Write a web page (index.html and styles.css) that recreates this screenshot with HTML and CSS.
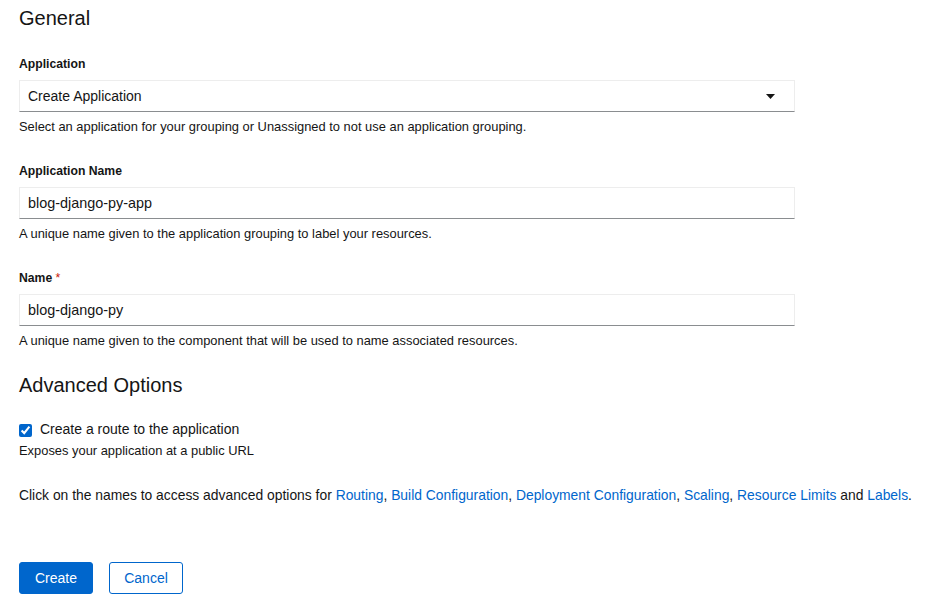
FILE: index.html
```html
<!DOCTYPE html>
<html lang="en">
<head>
<meta charset="utf-8">
<title>General</title>
<link rel="stylesheet" href="styles.css">
</head>
<body>
<form class="form">
  <h2 class="section-title">General</h2>
  <div class="groups">
    <div class="group">
      <label class="label">Application</label>
      <div class="select">
        <span class="select-text">Create Application</span>
        <svg class="caret" width="9" height="5" viewBox="0 0 9 5"><path d="M0 0 L9 0 L4.5 5 Z" fill="#151515"/></svg>
      </div>
      <div class="helper">Select an application for your grouping or Unassigned to not use an application grouping.</div>
    </div>
    <div class="group">
      <label class="label">Application Name</label>
      <div class="input">blog-django-py-app</div>
      <div class="helper">A unique name given to the application grouping to label your resources.</div>
    </div>
    <div class="group">
      <label class="label">Name <span class="req">*</span></label>
      <div class="input">blog-django-py</div>
      <div class="helper">A unique name given to the component that will be used to name associated resources.</div>
    </div>
  </div>
  <h2 class="section-title adv">Advanced Options</h2>
  <div class="check-row">
    <input type="checkbox" class="check" checked>
    <span class="check-label">Create a route to the application</span>
  </div>
  <div class="check-helper">Exposes your application at a public URL</div>
  <p class="advanced">Click on the names to access advanced options for <a href="#">Routing</a>, <a href="#">Build Configuration</a>, <a href="#">Deployment Configuration</a>, <a href="#">Scaling</a>, <a href="#">Resource Limits</a> and <a href="#">Labels</a>.</p>
  <div class="actions">
    <button type="button" class="btn btn-primary">Create</button>
    <button type="button" class="btn btn-secondary">Cancel</button>
  </div>
</form>
</body>
</html>
```
FILE: styles.css
```css
* { box-sizing: border-box; }
html, body { margin: 0; padding: 0; background: #fff; }
body {
  font-family: "Liberation Sans", Arial, sans-serif;
  color: #151515;
}
.form {
  padding: 5px 0 0 19px;
  width: 795px;
}
.section-title {
  margin: 0;
  font-size: 20px;
  line-height: 26px;
  font-weight: 400;
}
.groups {
  display: flex;
  flex-direction: column;
  gap: 27px;
  margin-top: 25px;
}
.group { display: flex; flex-direction: column; }
.label {
  font-size: 12.2px;
  line-height: 16px;
  font-weight: 700;
  margin-bottom: 8px;
}
.req { color: #c9190b; font-weight: 400; }
.select, .input {
  height: 32px;
  border: 1px solid #ededed;
  border-bottom-color: #8a8d90;
  font-size: 14px;
  line-height: 30px;
  padding: 0 8px;
  width: 776px;
}
.input { font-size: 14.4px; }
.select { display: flex; align-items: center; justify-content: space-between; padding-right: 19px; }
.caret { display: block; margin-top: 1px; }
.helper {
  font-size: 12.9px;
  line-height: 18px;
  margin-top: 6px;
}
.adv { margin-top: 22px; }
.check-row {
  display: flex;
  align-items: center;
  gap: 8px;
  margin-top: 21px;
  height: 20px;
}
.check {
  margin: 3px 0 0 0;
  width: 13px;
  height: 13px;
  accent-color: #0066cc;
}
.check-label { font-size: 14px; line-height: 20px; }
.check-helper { font-size: 12.9px; line-height: 18px; margin-top: 3px; }
.advanced {
  margin: 25px 0 0;
  font-size: 13.87px;
  line-height: 20px;
  white-space: nowrap;
}
.advanced a { color: #0066cc; text-decoration: none; }
.actions {
  display: flex;
  gap: 16px;
  margin-top: 57px;
}
.btn {
  width: 74px;
  height: 32px;
  border-radius: 3px;
  font-family: inherit;
  font-size: 14px;
  padding: 0;
  cursor: pointer;
}
.btn-primary { background: #0066cc; color: #fff; border: 1px solid #0066cc; }
.btn-secondary { background: #fff; color: #0066cc; border: 1px solid #0066cc; }
```
